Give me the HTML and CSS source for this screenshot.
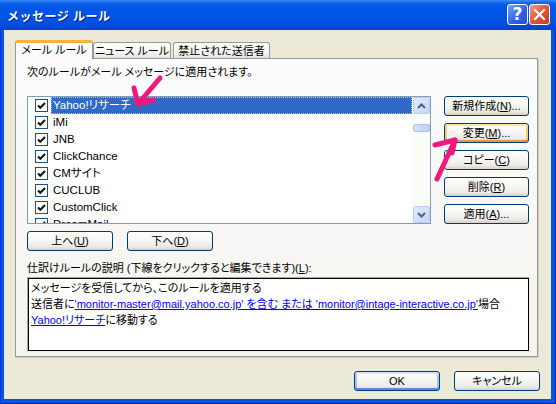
FILE: index.html
```html
<!DOCTYPE html>
<html lang="ja">
<head>
    <meta charset="UTF-8">
    <title>メッセージ ルール</title>
    <link rel="stylesheet" href="styles.css">
</head>
<body>
<div class="window">
    <div class="titlebar">
        <span class="title">メッセージ ルール</span>
        <div class="caption-buttons">
            <span class="cap help">?</span>
            <span class="cap close">
                <svg width="13" height="13" viewBox="0 0 13 13"><path d="M2 2 L11 11 M11 2 L2 11" stroke="#fff" stroke-width="2.2" stroke-linecap="square"/></svg>
            </span>
        </div>
    </div>

    <div class="client">
        <div class="tabs">
            <div class="tab active">メール ルール</div>
            <div class="tab">ニュース ルール</div>
            <div class="tab wide">禁止された送信者</div>
        </div>

        <div class="tab-page">
            <p class="label">次のルールがメール メッセージに適用されます。</p>

            <div class="rules-row">
                <div class="rule-list">
                    <ul class="rows">
                        <li class="selected"><span class="check"></span><span class="name">Yahoo!リサーチ</span></li>
                        <li><span class="check"></span><span class="name">iMi</span></li>
                        <li><span class="check"></span><span class="name">JNB</span></li>
                        <li><span class="check"></span><span class="name">ClickChance</span></li>
                        <li><span class="check"></span><span class="name">CMサイト</span></li>
                        <li><span class="check"></span><span class="name">CUCLUB</span></li>
                        <li><span class="check"></span><span class="name">CustomClick</span></li>
                        <li><span class="check"></span><span class="name">DreamMail</span></li>
                    </ul>
                    <div class="scrollbar">
                        <span class="sb-btn">
                            <svg width="9" height="6" viewBox="0 0 9 6"><path d="M1 5 L4.5 1.5 L8 5" fill="none" stroke="#4D6185" stroke-width="2"/></svg>
                        </span>
                        <div class="track"><span class="thumb"></span></div>
                        <span class="sb-btn">
                            <svg width="9" height="6" viewBox="0 0 9 6"><path d="M1 1 L4.5 4.5 L8 1" fill="none" stroke="#4D6185" stroke-width="2"/></svg>
                        </span>
                    </div>
                </div>

                <div class="side-buttons">
                    <button class="btn">新規作成(<u>N</u>)...</button>
                    <button class="btn hot">変更(<u>M</u>)...</button>
                    <button class="btn">コピー(<u>C</u>)</button>
                    <button class="btn">削除(<u>R</u>)</button>
                    <button class="btn">適用(<u>A</u>)...</button>
                </div>
            </div>

            <div class="move-buttons">
                <button class="btn">上へ(<u>U</u>)</button>
                <button class="btn">下へ(<u>D</u>)</button>
            </div>

            <p class="label second">仕訳けルールの説明 (下線をクリックすると編集できます)(<u>L</u>):</p>

            <div class="desc">
                <p>メッセージを受信してから、このルールを適用する</p>
                <p>送信者に<a href="#">'monitor-master@mail.yahoo.co.jp' を含む または 'monitor@intage-interactive.co.jp'</a>場合</p>
                <p><a href="#">Yahoo!リサーチ</a>に移動する</p>
            </div>
        </div>

        <div class="footer">
            <button class="btn default">OK</button>
            <button class="btn">キャンセル</button>
        </div>
    </div>

    <!-- pen marks drawn over the dialog -->
    <svg class="marks" width="556" height="404" viewBox="0 0 556 404">
        <g fill="none" stroke="#F0187A" stroke-width="5" stroke-linecap="round" stroke-linejoin="round">
            <path d="M160 78 L138 104"/>
            <path d="M134 88 L138 104 L153 100"/>
            <path d="M437 179 L455 140"/>
            <path d="M435 145 L455 140 L452 153"/>
        </g>
    </svg>
</div>
</body>
</html>
```

FILE: styles.css
```css
body {
    margin: 0;
    width: 556px;
    height: 404px;
    overflow: hidden;
    font-family: "Liberation Sans", "Noto Sans CJK JP", sans-serif;
    font-size: 11px;
    font-feature-settings: "palt";
    color: #000;
}

p {
    margin: 0;
}

.window {
    position: relative;
    width: 556px;
    height: 404px;
    display: flex;
    flex-direction: column;
    background: #0055E5;
    box-shadow: inset 1px 0 #0831D9, inset -1px 0 #001EA0, inset 0 -1px #001EA0;
}

/* title bar */
.titlebar {
    height: 30px;
    flex: none;
    display: flex;
    align-items: center;
    justify-content: space-between;
    padding: 0 6px 0 7px;
    background: linear-gradient(#3E8DF9 0, #1C6EF0 2px, #0A5CE8 4px, #0055E5 8px, #0054E3 18px, #004FDD 24px, #0046D3 28px, #0042CE 30px);
}

.title {
    color: #fff;
    font-weight: bold;
    font-size: 12px;
    font-feature-settings: normal;
    letter-spacing: 0.5px;
    text-shadow: 1px 1px #0A1883;
}

.caption-buttons {
    display: flex;
    gap: 1px;
    margin-top: -1px;
}

.cap {
    width: 19px;
    height: 19px;
    border: 1px solid #fff;
    border-radius: 3px;
    display: flex;
    align-items: center;
    justify-content: center;
}

.help {
    background: linear-gradient(135deg, #7AA5FA, #2E64E8 55%, #1F4FD0);
    color: #fff;
    font-family: "DejaVu Sans", sans-serif;
    font-weight: bold;
    font-size: 17px;
    line-height: 1;
}

.close {
    background: linear-gradient(135deg, #F29A7A, #E0583A 50%, #C63A1B);
}

/* dialog body */
.client {
    flex: 1;
    margin: 0 5px 5px 4px;
    background: #ECE9D8;
    display: flex;
    flex-direction: column;
}

.tabs {
    display: flex;
    align-items: flex-end;
    height: 18px;
    margin: 10px 0 0 11px;
    position: relative;
    z-index: 1;
}

.tab {
    width: 78px;
    height: 16px;
    box-sizing: border-box;
    border: 1px solid #919B9C;
    border-bottom: none;
    border-radius: 3px 3px 0 0;
    background: linear-gradient(#FFFFFF, #F3F3EF 70%, #E4E2D8);
    text-align: center;
    line-height: 16px;
    white-space: nowrap;
}

.tab.wide {
    width: 97px;
    margin-left: 2px;
}

.tab.active {
    height: 19px;
    margin-bottom: -1px;
    background: #FCFCFE;
    border-top: 3px solid #F4B43C;
    line-height: 15px;
}

.tab-page {
    height: 299px;
    box-sizing: border-box;
    margin: 0 13px 0 11px;
    border: 1px solid #919B9C;
    box-shadow: 1px 1px #D0CEBF;
    background: linear-gradient(#FCFCFE, #F4F3EE);
    padding: 0 0 0 11px;
}

.label {
    margin-top: 5px;
    line-height: 17px;
    height: 17px;
    white-space: nowrap;
}

.label.second {
    margin-top: 9px;
}

.rules-row {
    display: flex;
    gap: 13px;
    margin-top: 15px;
}

/* rule list with check boxes */
.rule-list {
    width: 404px;
    height: 128px;
    box-sizing: border-box;
    border: 1px solid #7F9DB9;
    background: #fff;
    display: flex;
    overflow: hidden;
}

.rows {
    list-style: none;
    margin: 0;
    padding: 0;
    flex: 1;
    overflow: hidden;
}

.rows li {
    height: 17px;
    display: flex;
    align-items: center;
    padding-left: 7px;
}

.check {
    width: 11px;
    height: 11px;
    border: 1px solid #1C5180;
    background: #fff url("data:image/svg+xml,%3Csvg xmlns='http://www.w3.org/2000/svg' width='11' height='11'%3E%3Cpath d='M2 5.5 L4.3 7.8 L9 3' fill='none' stroke='%23111' stroke-width='2'/%3E%3C/svg%3E");
    margin-right: 3px;
    flex: none;
}

.name {
    flex: 1;
    margin-right: 1px;
    height: 17px;
    box-sizing: border-box;
    line-height: 17px;
    padding-left: 2px;
    font-size: 11.5px;
}

.selected .name {
    background: #316AC5;
    color: #fff;
    outline: 1px dotted #E0C070;
    outline-offset: -1px;
}

.scrollbar {
    width: 17px;
    flex: none;
    display: flex;
    flex-direction: column;
    background: #FBFBF8;
}

.sb-btn {
    width: 17px;
    height: 17px;
    box-sizing: border-box;
    border: 1px solid #BCCDF4;
    border-radius: 2px;
    background: linear-gradient(135deg, #E4ECFD, #C4D5FA);
    display: flex;
    align-items: center;
    justify-content: center;
}

.track {
    flex: 1;
}

.thumb {
    display: block;
    height: 8px;
    margin-top: 10px;
    box-sizing: border-box;
    border: 1px solid #A7BEF0;
    border-radius: 2px;
    background: linear-gradient(90deg, #D4E0FC, #C0D2F9);
}

/* push buttons */
.btn {
    height: 20px;
    padding: 0;
    border: 1px solid #003C74;
    border-radius: 3px;
    background: linear-gradient(#FFFFFF, #F6F6F3 45%, #ECEBE6 80%, #D6D0C5);
    font: inherit;
    line-height: 18px;
    color: #000;
}

.btn.hot {
    box-shadow: inset 0 2px #FFE7A8, inset 0 -2px #E5973D, inset 2px 0 #FBCB6C, inset -2px 0 #FBCB6C;
}

.btn.default {
    box-shadow: inset 0 2px #CEE7FF, inset 0 -2px #6982EE, inset 2px 0 #A9C2F4, inset -2px 0 #A9C2F4;
}

.side-buttons {
    display: flex;
    flex-direction: column;
    gap: 7px;
}

.side-buttons .btn {
    width: 85px;
}

.move-buttons {
    display: flex;
    gap: 14px;
    margin-top: 7px;
}

.move-buttons .btn {
    width: 86px;
}

/* rule description */
.desc {
    width: 503px;
    height: 75px;
    box-sizing: border-box;
    border: 1px solid;
    border-color: #ACA899 #F1EFE2 #F1EFE2 #ACA899;
    box-shadow: inset 0 0 0 1px #000;
    background: #fff;
    padding: 2px 3px;
    line-height: 16px;
    white-space: nowrap;
}

.desc a {
    color: #0000FF;
}

.footer {
    display: flex;
    justify-content: flex-end;
    gap: 14px;
    margin: 14px 11px 0 0;
}

.footer .btn {
    width: 86px;
}

.marks {
    position: absolute;
    left: 0;
    top: 0;
    pointer-events: none;
}
```
